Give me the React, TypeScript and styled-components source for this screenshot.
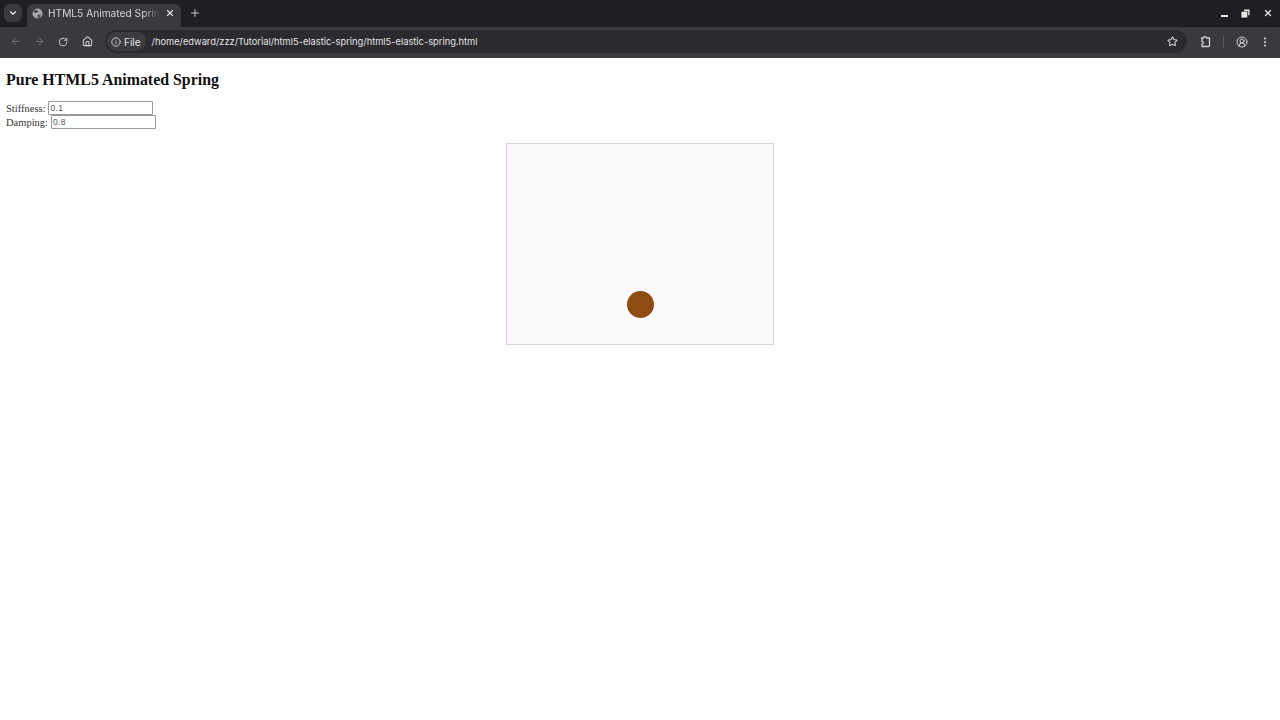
import { createGlobalStyle, styled } from 'styled-components';
import {
  ArrowLeft,
  ArrowRight,
  ChevronDown,
  CircleUserRound,
  EllipsisVertical,
  House,
  Info,
  Plus,
  RotateCw,
  Star,
  X,
} from 'lucide-react';

const GlobalStyle = createGlobalStyle`
  html, body {
    margin: 0;
    padding: 0;
    background: #ffffff;
  }
  body {
    width: 1280px;
    height: 720px;
    overflow: hidden;
  }
`;

const CHROME_FONT = `Inter, "Noto Sans", "Liberation Sans", sans-serif`;

const FaviconGlobe = () => (
  <svg width="11" height="11" viewBox="0 0 12 12">
    <circle cx="6" cy="6" r="5.500" fill="#a8a8ac" />
    <path d="M3 1.800l3 .6 .8 1.600-1.800 1.500-2.400-.4-1.400-1.200zM6.500 7l3 .4-.6 2.400-2 1.300-1-1.800z" fill="#4b4a4f" />
  </svg>
);

const ExtensionIcon = () => (
  <svg width="13" height="13" viewBox="0 0 13 13" fill="none" stroke="#d2d2d5" strokeWidth="1.300" strokeLinejoin="round">
    <path d="M2.500 3h2.200a1.400 1.400 0 0 1 2.800 0h3v7.500a1 1 0 0 1-1 1h-6.500v-2.500a1.300 1.300 0 0 0 0-2.600v-2.900a.5.5 0 0 1 .5-.5z" />
  </svg>
);

export default function App() {
  return (
    <>
      <GlobalStyle />
      <TabStrip>
        <TabMenu>
          <ChevronDown size={10} strokeWidth={3} />
        </TabMenu>
        <Tab>
          <FaviconGlobe />
          <TabTitle>HTML5 Animated Sprin</TabTitle>
          <TabClose>
            <X size={10} strokeWidth={2.6} />
          </TabClose>
        </Tab>
        <NewTab>
          <Plus size={12} strokeWidth={2} />
        </NewTab>
        <WindowControls>
          <Minimize />
          <Restore>
            <svg width="9" height="9" viewBox="0 0 10 10">
              <path d="M3.500 0.500h6v6.500h-1.500v-4.500h-4.500z" fill="#e8e8e8" />
              <path d="M0.500 3h6.500v6.500h-6.500z" fill="#e8e8e8" />
            </svg>
          </Restore>
          <CloseWindow>
            <X size={10} strokeWidth={3} />
          </CloseWindow>
        </WindowControls>
      </TabStrip>
      <Toolbar>
        <NavButton $dim>
          <ArrowLeft size={11} strokeWidth={2} />
        </NavButton>
        <NavButton $dim>
          <ArrowRight size={11} strokeWidth={2} />
        </NavButton>
        <NavButton>
          <RotateCw size={10} strokeWidth={2.2} />
        </NavButton>
        <NavButton>
          <House size={11} strokeWidth={2.2} />
        </NavButton>
        <Omnibox>
          <FileChip>
            <Info size={10} strokeWidth={2} />
            File
          </FileChip>
          <Url>/home/edward/zzz/Tutorial/html5-elastic-spring/html5-elastic-spring.html</Url>
          <Star size={11} strokeWidth={2.2} color="#d6d6d8" />
        </Omnibox>
        <ToolbarActions>
          <ExtensionIcon />
          <ActionDivider />
          <CircleUserRound size={12} strokeWidth={2} />
          <EllipsisVertical size={12} strokeWidth={2.4} />
        </ToolbarActions>
      </Toolbar>
      <Page>
        <Heading>Pure HTML5 Animated Spring</Heading>
        <Field>
          Stiffness: <NumberInput defaultValue="0.1" readOnly />
        </Field>
        <Field>
          Damping: <NumberInput defaultValue="0.8" readOnly />
        </Field>
        <Stage>
          <Ball />
        </Stage>
      </Page>
    </>
  );
}

const TabStrip = styled.div`
  height: 27px;
  background: #1f1e23;
  display: flex;
  align-items: flex-end;
  color: #e3e3e6;
  font-family: ${CHROME_FONT};
`;

const TabMenu = styled.div`
  width: 18px;
  height: 18px;
  margin: 0 0 5px 4px;
  border-radius: 6px;
  background: #3a393e;
  display: flex;
  align-items: center;
  justify-content: center;
`;

const Tab = styled.div`
  width: 154px;
  height: 23px;
  margin-left: 5px;
  padding: 0 6px 5px 5px;
  box-sizing: border-box;
  border-radius: 7px 7px 0 0;
  background: #3a393e;
  display: flex;
  align-items: center;
  gap: 5px;
`;

const TabTitle = styled.span`
  flex: 1;
  white-space: nowrap;
  font-size: 10.200px;
  color: #d4d4d7;
  -webkit-mask-image: linear-gradient(to right, #000 85%, transparent 100%);
  mask-image: linear-gradient(to right, #000 85%, transparent 100%);
`;

const TabClose = styled.span`
  display: flex;
  color: #e6e6e8;
`;

const NewTab = styled.div`
  display: flex;
  margin: 0 0 8px 8px;
  color: #c8c8cb;
`;

const WindowControls = styled.div`
  margin-left: auto;
  padding: 0 7px 9px 0;
  display: flex;
  align-items: center;
  gap: 13px;
`;

const Minimize = styled.span`
  width: 7px;
  height: 2px;
  margin-top: 6px;
  background: #e8e8e8;
`;

const Restore = styled.span`
  display: flex;
`;

const CloseWindow = styled.span`
  display: flex;
  color: #e8e8e8;
`;

const Toolbar = styled.div`
  height: 31px;
  padding: 0 0 2px 3px;
  box-sizing: border-box;
  background: #3a393e;
  display: flex;
  align-items: center;
  color: #d2d2d5;
  font-family: ${CHROME_FONT};
`;

const NavButton = styled.div<{ $dim?: boolean }>`
  width: 24px;
  display: flex;
  justify-content: center;
  color: ${({ $dim }) => ($dim ? '#76767a' : '#d2d2d5')};
`;

const Omnibox = styled.div`
  width: 1082px;
  height: 23px;
  margin-left: 6px;
  padding-right: 9px;
  box-sizing: border-box;
  border-radius: 12px;
  background: #2b2a2f;
  display: flex;
  align-items: center;
`;

const FileChip = styled.div`
  height: 19px;
  margin-left: 2px;
  padding: 0 5px 0 4px;
  border-radius: 10px;
  background: #3c3b40;
  display: flex;
  align-items: center;
  gap: 3px;
  font-size: 10px;
  color: #e2e2e4;
`;

const Url = styled.span`
  flex: 1;
  margin-left: 6px;
  font-size: 9.300px;
  color: #e4e4e6;
  white-space: nowrap;
`;

const ToolbarActions = styled.div`
  flex: 1;
  padding: 0 9px 0 12px;
  display: flex;
  align-items: center;
  justify-content: space-between;
`;

const ActionDivider = styled.span`
  width: 1px;
  height: 12px;
  background: #58585c;
`;

const Page = styled.main`
  padding: 13px 6px 0;
  font-family: 'Liberation Serif', 'Times New Roman', serif;
  color: #333333;
`;

const Heading = styled.h2`
  margin: 0 0 12px;
  font-size: 15.900px;
  line-height: 18px;
  font-weight: bold;
  color: #111111;
`;

const Field = styled.div`
  height: 14px;
  display: flex;
  align-items: center;
  gap: 3px;
  font-size: 10.500px;
  white-space: nowrap;
`;

const NumberInput = styled.input`
  width: 105px;
  height: 14px;
  padding: 0 1px;
  box-sizing: border-box;
  border: 1px solid #999999;
  border-radius: 1px;
  background: #ffffff;
  font-family: 'Liberation Sans', Arial, sans-serif;
  font-size: 8.500px;
  letter-spacing: 0.3px;
  color: #555555;
  outline: none;
`;

const Stage = styled.div`
  position: relative;
  width: 268px;
  height: 202px;
  margin: 14px auto 0;
  box-sizing: border-box;
  border: 1px solid #d8d8d8;
  background: #faf8fb;
`;

const Ball = styled.div`
  position: absolute;
  left: 119.500px;
  top: 146.500px;
  width: 27px;
  height: 27px;
  border-radius: 50%;
  background: #8f4c10;
`;
